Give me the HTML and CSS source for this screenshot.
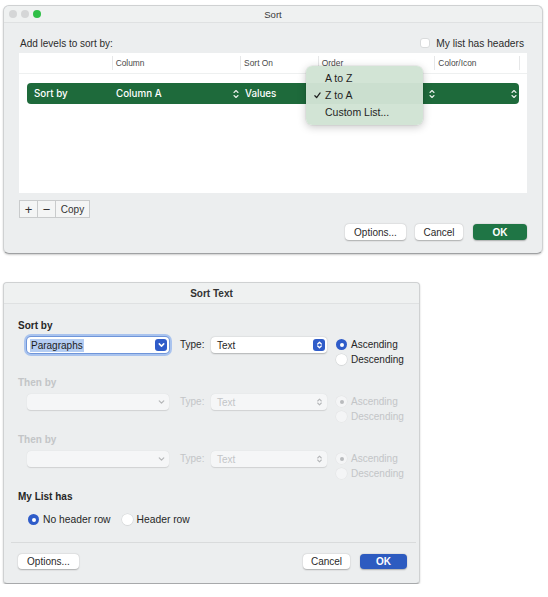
FILE: index.html
```html
<!DOCTYPE html>
<html>
<head>
<meta charset="utf-8">
<link rel="stylesheet" href="styles.css">
</head>
<body>
<div class="page">
  <div class="win win-sort">
    <div class="titlebar">
      <div class="lights"><span class="light"></span><span class="light"></span><span class="light green"></span></div>
      <div class="title">Sort</div>
      <div></div>
    </div>
    <div class="sort-body">
      <div class="sort-top">
        <span>Add levels to sort by:</span>
        <span class="headers"><span class="checkbox"></span>My list has headers</span>
      </div>
      <div class="table">
        <div class="thead">
          <div class="th th-first"></div>
          <div class="th w129">Column</div>
          <div class="th w78">Sort On</div>
          <div class="th w117">Order</div>
          <div class="th w85">Color/Icon</div>
          <div class="th w8"></div>
        </div>
        <div class="level">
          <div class="lc c1">Sort by</div>
          <div class="lc c2">Column A</div>
          <div class="lc c3"><svg class="ud" viewBox="0 0 6 10"><path d="M1 3.5 L3 1.5 L5 3.5 M1 6.5 L3 8.5 L5 6.5"/></svg></div>
          <div class="lc c4">Values</div>
          <div class="lc c5"><svg class="ud" viewBox="0 0 6 10"><path d="M1 3.5 L3 1.5 L5 3.5 M1 6.5 L3 8.5 L5 6.5"/></svg></div>
          <div class="lc c6"><svg class="ud" viewBox="0 0 6 10"><path d="M1 3.5 L3 1.5 L5 3.5 M1 6.5 L3 8.5 L5 6.5"/></svg></div>
        </div>
      </div>
      <div class="seg">
        <span class="seg-btn sq">+</span><span class="seg-btn sq">&minus;</span><span class="seg-btn copy">Copy</span>
      </div>
      <div class="actions">
        <span class="btn b-options">Options...</span>
        <span class="btn b-cancel">Cancel</span>
        <span class="btn b-ok green-ok">OK</span>
      </div>
    </div>
    <div class="menu">
      <div class="mi">A to Z</div>
      <div class="mi"><svg class="check" viewBox="0 0 8 8"><path d="M1 4.3 L3 6.5 L7 1"/></svg>Z to A</div>
      <div class="mi">Custom List...</div>
    </div>
  </div>

  <div class="win win-text">
    <div class="titlebar t2">
      <div></div>
      <div class="title bold">Sort Text</div>
      <div></div>
    </div>
    <div class="text-body">
      <div class="section">
        <div class="sec-label">Sort by</div>
        <div class="sec-row">
          <div class="popup focus"><span class="sel-text">Paragraphs</span><span class="pbtn blue"><svg viewBox="0 0 8 8"><path d="M2 3 L4 5 L6 3"/></svg></span></div>
          <span class="type">Type:</span>
          <div class="popup pop-type"><span class="ptxt">Text</span><span class="pbtn blue"><svg viewBox="0 0 8 10"><path d="M2.2 4 L4 2.2 L5.8 4 M2.2 6 L4 7.8 L5.8 6"/></svg></span></div>
          <div class="radios">
            <div class="ropt"><span class="radio on"></span>Ascending</div>
            <div class="ropt"><span class="radio"></span>Descending</div>
          </div>
        </div>
      </div>
      <div class="section disabled">
        <div class="sec-label">Then by</div>
        <div class="sec-row">
          <div class="popup"><span class="ptxt"></span><span class="pbtn"><svg viewBox="0 0 8 8"><path d="M2 3 L4 5 L6 3"/></svg></span></div>
          <span class="type">Type:</span>
          <div class="popup pop-type"><span class="ptxt">Text</span><span class="pbtn"><svg viewBox="0 0 8 10"><path d="M2.2 4 L4 2.2 L5.8 4 M2.2 6 L4 7.8 L5.8 6"/></svg></span></div>
          <div class="radios">
            <div class="ropt"><span class="radio on"></span>Ascending</div>
            <div class="ropt"><span class="radio"></span>Descending</div>
          </div>
        </div>
      </div>
      <div class="section disabled">
        <div class="sec-label">Then by</div>
        <div class="sec-row">
          <div class="popup"><span class="ptxt"></span><span class="pbtn"><svg viewBox="0 0 8 8"><path d="M2 3 L4 5 L6 3"/></svg></span></div>
          <span class="type">Type:</span>
          <div class="popup pop-type"><span class="ptxt">Text</span><span class="pbtn"><svg viewBox="0 0 8 10"><path d="M2.2 4 L4 2.2 L5.8 4 M2.2 6 L4 7.8 L5.8 6"/></svg></span></div>
          <div class="radios">
            <div class="ropt"><span class="radio on"></span>Ascending</div>
            <div class="ropt"><span class="radio"></span>Descending</div>
          </div>
        </div>
      </div>
      <div class="sec-label">My List has</div>
      <div class="header-opts">
        <div class="ropt"><span class="radio on"></span>No header row</div>
        <div class="ropt"><span class="radio"></span>Header row</div>
      </div>
      <div class="sep"></div>
      <div class="actions2">
        <span class="btn b2-options">Options...</span>
        <span class="spacer"></span>
        <span class="btn b2-cancel">Cancel</span>
        <span class="btn b2-ok">OK</span>
      </div>
    </div>
  </div>
</div>
</body>
</html>
```

FILE: styles.css
```css
* { box-sizing: border-box; }
html, body { margin: 0; padding: 0; background: #ffffff; }
body {
  font-family: "Liberation Sans", Arial, sans-serif;
  font-size: 10px;
  color: #262626;
}
.page { padding: 5px 0 0 3px; }

.win {
  position: relative;
  background: #eceeef;
  border: 1px solid #cfd1d2;
  border-radius: 6px;
  box-shadow: 0 1px 2px rgba(0,0,0,0.2);
  overflow: visible;
}
.win-sort { width: 540px; height: 249px; border-bottom-color: #9fa1a3; }
.win-text { width: 417px; height: 302px; margin-top: 28px; border-radius: 4px; border-bottom-color: #a7a9ab; }

.titlebar {
  display: grid;
  grid-template-columns: 1fr auto 1fr;
  align-items: center;
  height: 17px;
  background: #eff1f1;
  border-bottom: 1px solid #dfe1e2;
  border-radius: 6px 6px 0 0;
}
.titlebar.t2 { height: 21px; border-radius: 4px 4px 0 0; }
.title { font-size: 9.5px; color: #3a3a3a; }
.title.bold { font-weight: 700; font-size: 10px; color: #333; }
.lights { display: flex; gap: 4px; padding-left: 5px; }
.light { width: 8px; height: 8px; border-radius: 50%; background: #d5d6d7; }
.light.green { background: #2fbf47; }

/* Sort dialog body */
.sort-body { padding: 14px 15px 0 15px; }
.sort-top {
  display: flex; justify-content: space-between; align-items: center;
  height: 12px; padding: 0 3px 0 1px; font-size: 10px; color: #2b2b2b;
}
.headers { display: flex; align-items: center; gap: 6px; font-size: 10.2px; }
.checkbox {
  width: 10px; height: 10px; border-radius: 3px;
  background: #fff; border: 1px solid #d9dbdc;
}
.table { margin-top: 4px; height: 140px; background: #ffffff; }
.thead { display: flex; height: 21px; align-items: center; border-bottom: 1px solid #eef0f0; }
.th {
  height: 14px; line-height: 14px; font-size: 8.4px; color: #4a4a4a;
  border-left: 1px solid #e6e7e8; padding-left: 3px;
}
.th-first { width: 93px; border-left: none; }
.w129 { width: 129px; } .w78 { width: 78px; } .w117 { width: 117px; } .w85 { width: 85px; } .w8 { width: 8px; }

.level {
  margin: 9px 8px 0 8px; height: 21px; border-radius: 4px;
  background: #1e6a3b; color: #fff;
  display: grid; grid-template-columns: 89px 117px 12px 184px 82px 10px;
  align-items: center;
  font-family: Inter, "Liberation Sans", sans-serif; font-weight: 500; font-size: 9.8px;
}
.lc.c1 { padding-left: 7px; }
.ud { width: 6px; height: 10px; display: block; }
.ud path { fill: none; stroke: #e8efe9; stroke-width: 1.1; stroke-linecap: round; stroke-linejoin: round; }

.seg { display: flex; margin-top: 7px; height: 18px; }
.seg-btn {
  height: 18px; display: flex; align-items: center; justify-content: center;
  background: #f4f5f5; border: 1px solid #c9cbcc; margin-left: -1px; color: #333;
}
.seg-btn:first-child { margin-left: 0; }
.seg-btn.sq { width: 19px; font-size: 13px; }
.seg-btn.copy { width: 35px; font-size: 10px; }

.actions { display: flex; justify-content: flex-end; margin-top: 6px; gap: 9px; }
.btn {
  height: 16px; display: flex; align-items: center; justify-content: center;
  background: #ffffff; border-radius: 4px; font-size: 10px; color: #2a2a2a;
  box-shadow: 0 0.5px 1.5px rgba(0,0,0,0.28);
}
.b-options { width: 61px; }
.b-cancel { width: 48px; margin-right: 1px; }
.b-ok { width: 54px; }
.green-ok { background: #1f7545; color: #fff; font-weight: 700; font-size: 10px; }

.menu {
  position: absolute; left: 302px; top: 60px; width: 117px; height: 59px;
  background: rgba(209, 227, 212, 0.97); border-radius: 6px;
  box-shadow: 0 2px 8px rgba(0,0,0,0.22), 0 0 0 0.5px rgba(0,0,0,0.08);
  padding: 4px 0;
  font-size: 10.5px; color: #1f1f1f;
}
.mi { height: 17px; line-height: 17px; padding-left: 19px; position: relative; }
.check { position: absolute; left: 8px; top: 5px; width: 7px; height: 7px; }
.check path { fill: none; stroke: #1f1f1f; stroke-width: 1.4; stroke-linecap: round; stroke-linejoin: round; }

/* Sort Text dialog */
.text-body { padding: 16px 5px 0 14px; }
.section { height: 47px; margin-bottom: 10px; }
.sec-label { height: 12px; line-height: 12px; font-weight: 700; font-size: 10px; color: #262626; }
.sec-row { display: flex; align-items: flex-start; margin-top: 5px; padding-left: 9px; }
.popup {
  width: 142px; height: 16px; background: #ffffff; border-radius: 4px;
  display: flex; align-items: center; justify-content: space-between;
  padding: 0 2px 0 3px;
  box-shadow: 0 0.5px 1.5px rgba(0,0,0,0.25);
}
.popup.focus { box-shadow: 0 0 0 1px #6f95d9, 0 0 0 3px #a9c3ee; }
.sel-text { background: #b5cdf2; padding: 0 1px; line-height: 13px; color: #1c1c1c; }
.ptxt { padding-left: 3px; color: #262626; }
.pbtn { width: 12px; height: 12px; border-radius: 3px; display: flex; align-items: center; justify-content: center; }
.pbtn svg { width: 9px; height: 10px; }
.pbtn path { fill: none; stroke: #9a9c9e; stroke-width: 1.1; stroke-linecap: round; stroke-linejoin: round; }
.pbtn.blue { background: #2f5cc9; }
.pbtn.blue path { stroke: #ffffff; stroke-width: 1.3; }
.type { margin-left: 11px; width: 31px; line-height: 16px; color: #262626; }
.pop-type { width: 116px; }
.radios { margin-left: 9px; }
.ropt { display: flex; align-items: center; height: 15px; color: #262626; }
.radio {
  width: 11px; height: 11px; border-radius: 50%; background: #fff;
  box-shadow: 0 0 0 0.5px #d4d6d7, 0 0.5px 1px rgba(0,0,0,0.15);
  margin-right: 4px; flex: none; position: relative;
}
.radio.on { background: #2f5cc9; box-shadow: none; }
.radio.on::after {
  content: ""; position: absolute; left: 3.5px; top: 3.5px; width: 4px; height: 4px;
  border-radius: 50%; background: #fff;
}

.disabled .sec-label, .disabled .type, .disabled .ropt, .disabled .ptxt { color: #c3c5c7; }
.disabled .popup { background: #f5f6f7; box-shadow: 0 0.5px 1px rgba(0,0,0,0.12); }
.disabled .radio { background: #f4f5f6; box-shadow: 0 0 0 0.5px #e2e3e4; }
.disabled .radio.on { background: #f4f5f6; box-shadow: 0 0 0 0.5px #e2e3e4; }
.disabled .radio.on::after { background: #b9bbbd; }
.disabled .pbtn path { stroke: #b5b7b9; }

.header-opts { display: flex; gap: 11px; margin-top: 9px; padding-left: 10px; height: 15px; font-size: 10.3px; }
.header-opts .ropt { height: 15px; }
.sep { height: 1px; background: #d9dbdc; margin: 15px 0 0 -7px; width: 405px; }
.actions2 { display: flex; margin-top: 11px; padding-right: 7px; gap: 10px; }
.actions2 .btn { height: 15px; }
.spacer { flex: 1; }
.b2-options { width: 61px; margin-left: 0; }
.b2-cancel { width: 47px; }
.b2-ok { width: 47px; background: #2d5bc0; color: #fff; font-weight: 700; }
```
